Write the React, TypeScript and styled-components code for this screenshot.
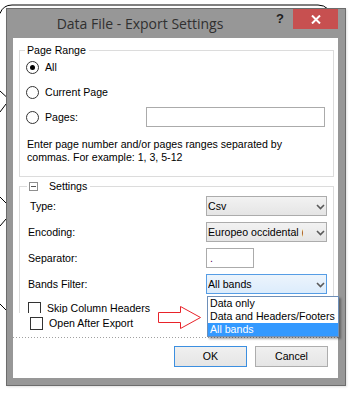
import styled, { createGlobalStyle } from "styled-components";

const GlobalStyle = createGlobalStyle`
  html, body {
    margin: 0;
    padding: 0;
    background: #ffffff;
  }
  body {
    font-family: "Liberation Sans", Arial, sans-serif;
  }
`;

type IndentProps = {
  $indent?: number;
};

type ComboProps = {
  $active?: boolean;
};

function Chevron() {
  return (
    <svg width="12" height="18" viewBox="0 0 12 18">
      <path d="M3 8 L6.5 11.5 L10 8" stroke="#5a5a5a" strokeWidth="1.6" fill="none" />
    </svg>
  );
}

function App() {
  return (
    <>
      <GlobalStyle />
      <Stage>
        <Backdrop width="356" height="398" viewBox="0 0 356 398">
          <path d="M0 13.5 Q3 5 12 5 L318 5 Q324 5 328 9" />
          <path d="M0 91 L6 96.5" />
          <path d="M0 112 L6 104" />
          <path d="M0 197 L6 203" />
          <path d="M0 226 L6 219" />
          <path d="M0 304 L6 310" />
        </Backdrop>
        <Window>
          <TitleBar>
            <Title>Data File - Export Settings</Title>
            <HelpButton>?</HelpButton>
            <CloseButton>
              <svg width="10" height="9" viewBox="0 0 10 9">
                <path d="M1 0.5 L9 8.5 M9 0.5 L1 8.5" stroke="#ffffff" strokeWidth="2" />
              </svg>
            </CloseButton>
          </TitleBar>
          <Client>
            <Group>
              <Legend>Page Range</Legend>
              <RadioList>
                <OptionRow>
                  <Radio $checked />
                  <span>All</span>
                </OptionRow>
                <OptionRow>
                  <Radio />
                  <span>Current Page</span>
                </OptionRow>
                <OptionRow>
                  <Radio />
                  <span>Pages:</span>
                  <PagesBox />
                </OptionRow>
              </RadioList>
              <Hint>
                Enter page number and/or pages ranges separated by
                <br />
                commas. For example: 1, 3, 5-12
              </Hint>
            </Group>

            <SettingsGroup>
              <Legend>
                <CollapseBox />
                Settings
              </Legend>
              <FieldGrid>
                <FieldLabel $indent={2}>Type:</FieldLabel>
                <Combo>
                  <ComboText>Csv</ComboText>
                  <Chevron />
                </Combo>
                <FieldLabel>Encoding:</FieldLabel>
                <Combo>
                  <ComboText>Europeo occidental (Windows)</ComboText>
                  <Chevron />
                </Combo>
                <FieldLabel>Separator:</FieldLabel>
                <SeparatorBox>.</SeparatorBox>
                <FieldLabel>Bands Filter:</FieldLabel>
                <Combo $active>
                  <ComboText>All bands</ComboText>
                  <Chevron />
                </Combo>
              </FieldGrid>
              <CheckRow>
                <CheckBox />
                Skip Column Headers
              </CheckRow>
            </SettingsGroup>

            <CheckRow $indent={17}>
              <CheckBox />
              Open After Export
            </CheckRow>

            <Divider />

            <ButtonRow>
              <DialogButton $default>OK</DialogButton>
              <DialogButton>Cancel</DialogButton>
            </ButtonRow>

            <DropList>
              <DropItem>Data only</DropItem>
              <DropItem>Data and Headers/Footers</DropItem>
              <DropItem $selected>All bands</DropItem>
            </DropList>

            <Pointer width="44" height="24" viewBox="0 0 44 24">
              <path d="M0.5 6.5 L22.5 6.5 L22.5 0.5 L42.5 11.5 L22.5 22.5 L22.5 16.5 L0.5 16.5 Z" />
            </Pointer>
          </Client>
        </Window>
      </Stage>
    </>
  );
}

export default App;

const Stage = styled.div`
  position: relative;
  width: 356px;
  height: 398px;
  box-sizing: border-box;
  padding: 8px 0 0 6px;
  overflow: hidden;
`;

const Backdrop = styled.svg`
  position: absolute;
  left: 0;
  top: 0;

  path {
    stroke: #000000;
    stroke-width: 1;
    fill: none;
  }
`;

const Window = styled.div`
  position: relative;
  width: 340px;
  box-sizing: border-box;
  border: 1px solid #6c6c6c;
  background: #979797;
  padding: 0 7px 7px 6px;
  box-shadow: 1px 1px 2px rgba(0, 0, 0, 0.12);
`;

const TitleBar = styled.div`
  display: flex;
  align-items: flex-start;
  height: 29px;
`;

const Title = styled.div`
  flex: 1;
  text-align: center;
  font-family: "Open Sans", "Noto Sans", sans-serif;
  font-size: 14px;
  line-height: 29px;
  color: #303030;
  white-space: nowrap;
`;

const HelpButton = styled.div`
  width: 26px;
  height: 20px;
  text-align: center;
  font-family: "Liberation Sans", Arial, sans-serif;
  font-weight: bold;
  font-size: 13px;
  line-height: 20px;
  color: #1e1e1e;
`;

const CloseButton = styled.div`
  width: 45px;
  height: 20px;
  background: #c75050;
  display: flex;
  align-items: center;
  justify-content: center;
`;

const Client = styled.div`
  position: relative;
  height: 340px;
  box-sizing: border-box;
  padding-top: 6px;
  background: #ffffff;
  font-size: 10.6px;
  line-height: 13px;
  color: #000000;
`;

const Group = styled.fieldset`
  margin: 0 4px 0 6px;
  padding: 0 6px 12px 6px;
  border: 1px solid #dcdcdc;
  min-inline-size: 0;
`;

const SettingsGroup = styled(Group)`
  margin-top: 3px;
  padding: 3px 8px 0 8px;
  height: 133px;
  box-sizing: border-box;
  border-bottom: none;
  overflow: hidden;
`;

const Legend = styled.legend`
  display: flex;
  align-items: center;
  margin-left: -1px;
  padding: 0 3px 0 2px;
  line-height: 13px;
`;

const CollapseBox = styled.span`
  width: 9px;
  height: 9px;
  box-sizing: border-box;
  border: 1px solid #8f8f8f;
  margin-right: 11px;
  display: flex;
  align-items: center;
  justify-content: center;

  &::after {
    content: "";
    width: 5px;
    height: 1px;
    background: #555555;
  }
`;

const RadioList = styled.div`
  display: flex;
  flex-direction: column;
  gap: 5px;
`;

const OptionRow = styled.div`
  display: flex;
  align-items: center;
  height: 20px;
  gap: 6px;
`;

const Radio = styled.span<{ $checked?: boolean }>`
  width: 13px;
  height: 13px;
  box-sizing: border-box;
  border: 1px solid #333333;
  border-radius: 50%;
  background: #ffffff;
  display: flex;
  align-items: center;
  justify-content: center;
  flex: none;

  &::after {
    content: "";
    display: ${(props) => (props.$checked ? "block" : "none")};
    width: 5px;
    height: 5px;
    border-radius: 50%;
    background: #000000;
  }
`;

const PagesBox = styled.div`
  margin-left: auto;
  margin-right: 2px;
  width: 179px;
  height: 20px;
  box-sizing: border-box;
  border: 1px solid #ababab;
  background: #ffffff;
`;

const Hint = styled.p`
  margin: 11px 0 0 1px;
`;

const FieldGrid = styled.div`
  display: grid;
  grid-template-columns: 178px auto;
  grid-auto-rows: 20px;
  row-gap: 6px;
  align-items: center;
`;

const FieldLabel = styled.span<IndentProps>`
  padding-left: ${(props) => props.$indent || 0}px;
`;

const Combo = styled.div<ComboProps>`
  width: 121px;
  height: 20px;
  box-sizing: border-box;
  display: flex;
  align-items: center;
  padding-left: 1px;
  border: 1px solid ${(props) => (props.$active ? "#569de5" : "#acacac")};
  background: ${(props) =>
    props.$active
      ? "linear-gradient(#ecf4fc, #dcecfc)"
      : "linear-gradient(#f2f2f2, #e5e5e5)"};
`;

const ComboText = styled.span`
  flex: 1;
  min-width: 0;
  margin-right: 11px;
  overflow: hidden;
  white-space: nowrap;
`;

const SeparatorBox = styled.div`
  width: 48px;
  height: 20px;
  box-sizing: border-box;
  border: 1px solid #ababab;
  padding-left: 3px;
  line-height: 18px;
  color: #5a0060;
`;

const CheckRow = styled.div<IndentProps>`
  display: flex;
  align-items: center;
  gap: 6px;
  height: 13px;
  margin-top: ${(props) => (props.$indent ? 4 : 8)}px;
  padding-left: ${(props) => props.$indent || 0}px;
`;

const CheckBox = styled.span`
  width: 13px;
  height: 13px;
  box-sizing: border-box;
  border: 1px solid #333333;
  background: #ffffff;
  flex: none;
`;

const Divider = styled.div`
  height: 1px;
  margin-top: 7px;
  background: repeating-linear-gradient(
    to right,
    #a0a0a0 0 1px,
    transparent 1px 3px
  );
`;

const ButtonRow = styled.div`
  display: flex;
  justify-content: flex-end;
  gap: 8px;
  margin-top: 8px;
  padding-right: 10px;
`;

const DialogButton = styled.div<{ $default?: boolean }>`
  width: 73px;
  height: 21px;
  box-sizing: border-box;
  display: flex;
  align-items: center;
  justify-content: center;
  border: 1px solid ${(props) => (props.$default ? "#3c8fe0" : "#adadad")};
  background: linear-gradient(#f0f0f0, #e5e5e5);
`;

const DropList = styled.div`
  position: absolute;
  left: 194px;
  top: 258px;
  width: 132px;
  box-sizing: border-box;
  border: 1px solid #6e8fb8;
  background: #ffffff;
  box-shadow: 2px 2px 2px rgba(0, 0, 0, 0.35);
`;

const DropItem = styled.div<{ $selected?: boolean }>`
  height: 13px;
  padding-left: 2px;
  white-space: nowrap;
  background: ${(props) => (props.$selected ? "#3399ff" : "transparent")};
  color: ${(props) => (props.$selected ? "#ffffff" : "#000000")};
`;

const Pointer = styled.svg`
  position: absolute;
  left: 145px;
  top: 268px;

  path {
    fill: #ffffff;
    stroke: #e8232a;
    stroke-width: 1;
  }
`;
